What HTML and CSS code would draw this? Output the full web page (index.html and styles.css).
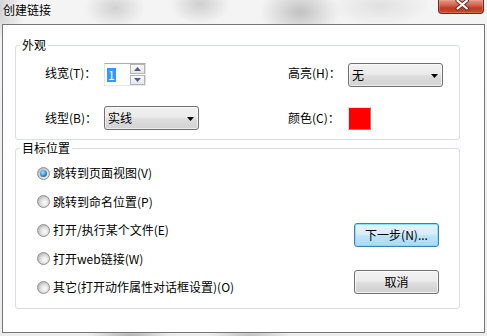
FILE: index.html
```html
<!DOCTYPE html>
<html lang="zh-CN">
<head>
<meta charset="utf-8">
<title>创建链接</title>
<link rel="stylesheet" href="styles.css">
</head>
<body>
<div class="window">
  <div class="titlebar">
    <span class="title">创建链接</span>
    <button class="close" aria-label="关闭">
      <svg width="46" height="14" viewBox="0 0 46 14">
        <path d="M20 0.5 L29.5 8.5 M29.5 0.5 L20 8.5" stroke="#6b2a1c" stroke-width="4.2" stroke-linecap="round" fill="none"/>
        <path d="M20 0.5 L29.5 8.5 M29.5 0.5 L20 8.5" stroke="#ffffff" stroke-width="2.2" stroke-linecap="round" fill="none"/>
      </svg>
    </button>
  </div>
  <div class="client">
    <fieldset class="group group-look">
      <legend>外观</legend>
      <div class="look-grid">
        <span class="lbl lbl-up">线宽(T)<span class="colon">：</span></span>
        <div class="spin">
          <div class="spin-text"><span class="sel">1</span></div>
          <div class="spin-btns">
            <span class="spin-btn"><svg width="7" height="4" viewBox="0 0 7 4"><path d="M3.5 0L7 4H0z" fill="#4f5f86"/></svg></span>
            <span class="spin-btn"><svg width="7" height="4" viewBox="0 0 7 4"><path d="M0 0H7L3.5 4z" fill="#4f5f86"/></svg></span>
          </div>
        </div>
        <span class="lbl lbl-up">高亮(H)<span class="colon">：</span></span>
        <div class="combo"><span>无</span><svg width="7" height="4" viewBox="0 0 7 4"><path d="M0 0H7L3.5 4z" fill="#000"/></svg></div>

        <span class="lbl">线型(B)<span class="colon">：</span></span>
        <div class="combo combo-style"><span>实线</span><svg width="7" height="4" viewBox="0 0 7 4"><path d="M0 0H7L3.5 4z" fill="#000"/></svg></div>
        <span class="lbl">颜色(C)<span class="colon">：</span></span>
        <div class="swatch"></div>
      </div>
    </fieldset>
    <fieldset class="group group-target">
      <legend>目标位置</legend>
      <div class="target-body">
        <div class="radios">
          <div class="radio-row"><span class="radio on"></span><span>跳转到页面视图(V)</span></div>
          <div class="radio-row"><span class="radio"></span><span>跳转到命名位置(P)</span></div>
          <div class="radio-row"><span class="radio"></span><span>打开/执行某个文件(E)</span></div>
          <div class="radio-row"><span class="radio"></span><span>打开web链接(W)</span></div>
          <div class="radio-row"><span class="radio"></span><span>其它(打开动作属性对话框设置)(O)</span></div>
        </div>
        <div class="buttons">
          <button class="btn btn-default">下一步(N)...</button>
          <button class="btn">取消</button>
        </div>
      </div>
    </fieldset>
  </div>
</div>
</body>
</html>
```

FILE: styles.css
```css
html, body {
  margin: 0;
  padding: 0;
}
body {
  width: 487px;
  height: 336px;
  overflow: hidden;
  font-family: "Noto Sans CJK SC", "Microsoft YaHei", sans-serif;
  font-size: 12px;
  color: #000;
  background:
    radial-gradient(ellipse 40px 26px at 300px 12px, rgba(160,160,160,0.6), rgba(160,160,160,0)),
    radial-gradient(ellipse 30px 20px at 200px 4px, rgba(170,170,170,0.5), rgba(170,170,170,0)),
    radial-gradient(ellipse 30px 20px at 115px 8px, rgba(175,175,175,0.5), rgba(175,175,175,0)),
    radial-gradient(ellipse 25px 30px at 0px 10px, rgba(170,170,170,0.55), rgba(170,170,170,0)),
    radial-gradient(ellipse 50px 20px at 380px 6px, rgba(200,200,200,0.45), rgba(200,200,200,0)),
    radial-gradient(ellipse 40px 10px at 130px 336px, rgba(140,140,140,0.6), rgba(140,140,140,0)),
    radial-gradient(ellipse 40px 10px at 250px 336px, rgba(150,150,150,0.5), rgba(150,150,150,0)),
    linear-gradient(#f4f4f4, #ececec);
}
.window {
  display: flex;
  flex-direction: column;
}
.titlebar {
  height: 24px;
  display: flex;
  justify-content: space-between;
  align-items: flex-start;
}
.title {
  padding: 2px 0 0 3px;
  line-height: 16px;
  font-size: 12px;
  text-shadow: 0 0 5px #fff, 0 0 8px #fff;
}
.close {
  width: 46px;
  height: 14px;
  margin: 0 3px 0 0;
  padding: 0;
  border: 1px solid #7a2416;
  border-top: none;
  border-radius: 0 0 4px 4px;
  background: linear-gradient(#df9a88 0%, #d36752 38%, #c13a21 62%, #c7492f 100%);
  box-shadow: inset 0 0 0 1px rgba(255,180,160,0.3);
  display: flex;
  overflow: hidden;
}
.close svg { display: block; margin-left: -1px; }

.client {
  margin: 0 2px;
  height: 309px;
  box-sizing: border-box;
  border: 1px solid #767676;
  background: #fff;
  padding-top: 13px;
}
.group {
  margin: 0 24px 0 12px;
  padding: 0;
  border: 1px solid #d5dfe5;
  border-radius: 3px;
  min-inline-size: 0;
}
.group legend {
  margin-left: 4px;
  padding: 0 2px;
  line-height: 14px;
  font-size: 12px;
}
.group-target {
  margin-top: 1px;
}

.look-grid {
  display: grid;
  grid-template-columns: 59px 184px 60px 95px;
  grid-template-rows: 24px 24px;
  row-gap: 19px;
  align-items: center;
  padding: 11px 0 9px 29px;
}
.lbl {
  line-height: 16px;
  white-space: nowrap;
}
.colon {
  font-family: "Noto Sans CJK JP", "Noto Sans CJK SC", sans-serif;
}
.lbl-up {
  align-self: start;
  margin-top: 2px;
}

.spin {
  align-self: start;
  width: 42px;
  height: 23px;
  box-sizing: border-box;
  border: 1px solid;
  border-color: #abadb3 #dbdfe6 #e3e9ef #e2e3ea;
  display: flex;
  justify-content: space-between;
}
.spin-text {
  display: flex;
  align-items: center;
  padding-left: 2px;
}
.sel {
  background: #3399ff;
  color: #fff;
  line-height: 14px;
  padding: 0 1px;
}
.spin-btns {
  width: 15px;
  display: flex;
  flex-direction: column;
  gap: 1px;
}
.spin-btn {
  height: 10px;
  box-sizing: border-box;
  border: 1px solid #b4b4b4;
  background: linear-gradient(#fbfbfb, #e6e6e6);
  display: flex;
  align-items: center;
  justify-content: center;
}

.combo {
  width: 95px;
  height: 24px;
  box-sizing: border-box;
  border: 1px solid #707070;
  border-radius: 3px;
  background: linear-gradient(#f2f2f2 0%, #ebebeb 45%, #dddddd 55%, #d2d2d2 100%);
  box-shadow: inset 0 0 0 1px rgba(255,255,255,0.6);
  display: flex;
  align-items: center;
  justify-content: space-between;
  padding: 0 4px 0 3px;
  line-height: 16px;
}
.combo svg { display: block; margin-top: 1px; }

.swatch {
  width: 23px;
  height: 23px;
  box-sizing: border-box;
  border: 1px solid;
  border-color: #e3e3e3 #8a8a8a #8a8a8a #e3e3e3;
  background: #ff0000;
}

.target-body {
  display: flex;
  justify-content: space-between;
  align-items: flex-end;
  padding: 10px 20px 13px 21px;
}
.radios {
  display: flex;
  flex-direction: column;
  gap: 12.5px;
}
.radio-row {
  height: 16px;
  display: flex;
  align-items: center;
  gap: 3px;
  line-height: 16px;
  white-space: nowrap;
}
.radio {
  width: 13px;
  height: 13px;
  box-sizing: border-box;
  border-radius: 50%;
  border: 1px solid #8e8f8f;
  background: radial-gradient(circle at 60% 60%, #fbfbfb 0, #ececec 2.5px, #d4d4d4 5px, #c2c2c2 6px);
  display: flex;
  align-items: center;
  justify-content: center;
}
.radio.on::after {
  content: "";
  width: 7px;
  height: 7px;
  border-radius: 50%;
  background: radial-gradient(circle at 40% 35%, #b5e6ff 0, #47a7e6 40%, #1b64a8 75%, #0e4378 100%);
}

.buttons {
  display: flex;
  flex-direction: column;
  gap: 23px;
  margin-bottom: 1px;
}
.btn {
  width: 85px;
  height: 24px;
  box-sizing: border-box;
  margin: 0;
  padding: 0;
  font-family: inherit;
  font-size: 12px;
  line-height: 16px;
  color: #000;
  border: 1px solid #707070;
  border-radius: 3px;
  background: linear-gradient(#f2f2f2 0%, #ebebeb 45%, #dddddd 55%, #cfcfcf 100%);
  box-shadow: inset 0 0 0 1px rgba(255,255,255,0.7);
}
.btn-default {
  border-color: #3c7fb1;
  background: linear-gradient(#e5f4fc 0%, #d6eefb 45%, #bde4f8 55%, #a9daf5 100%);
  box-shadow: inset 0 0 0 1px rgba(120,220,255,0.8);
}
```
